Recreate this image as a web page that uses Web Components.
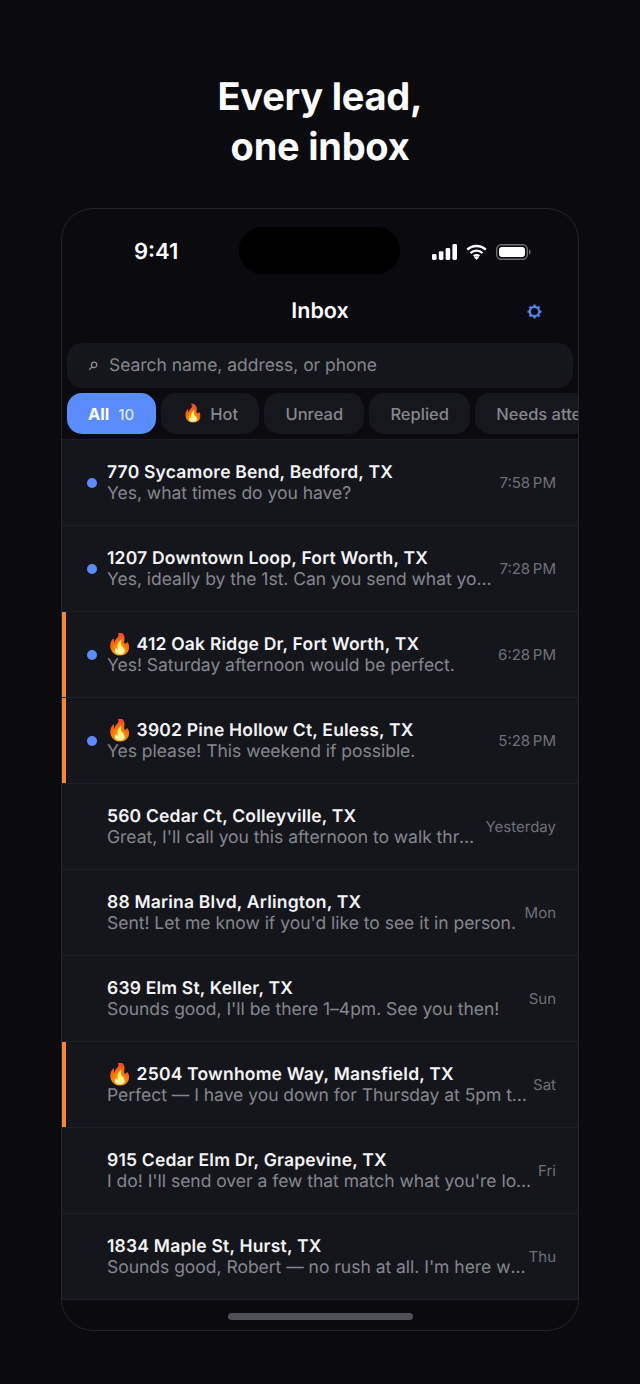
<!DOCTYPE html>
<html lang="en"><head><meta charset="utf-8"><title>Inbox</title>
<style>
html,body{margin:0;padding:0;background:#0a0a0f;}
body{width:640px;height:1384px;overflow:hidden;font-family:Inter,"Noto Sans",sans-serif;color:#fff;text-rendering:geometricPrecision;-webkit-font-smoothing:antialiased;}
</style></head><body>
<promo-page>
  <span slot="headline">Every lead,<br>one inbox</span>
  <phone-frame>
    <status-bar></status-bar>
    <nav-header>Inbox</nav-header>
    <search-bar placeholder="Search name, address, or phone"></search-bar>
    <filter-strip>
      <filter-chip active count="10">All</filter-chip>
      <filter-chip><span class="fire">🔥</span>Hot</filter-chip>
      <filter-chip>Unread</filter-chip>
      <filter-chip>Replied</filter-chip>
      <filter-chip>Needs attention</filter-chip>
    </filter-strip>
    <lead-list>
      <lead-row unread time="7:58 PM" title="770 Sycamore Bend, Bedford, TX" text="Yes, what times do you have?"></lead-row>
      <lead-row unread time="7:28 PM" title="1207 Downtown Loop, Fort Worth, TX" text="Yes, ideally by the 1st. Can you send what you have available?"></lead-row>
      <lead-row unread hot time="6:28 PM" title="412 Oak Ridge Dr, Fort Worth, TX" text="Yes! Saturday afternoon would be perfect."></lead-row>
      <lead-row unread hot time="5:28 PM" title="3902 Pine Hollow Ct, Euless, TX" text="Yes please! This weekend if possible."></lead-row>
      <lead-row time="Yesterday" title="560 Cedar Ct, Colleyville, TX" text="Great, I'll call you this afternoon to walk through the details."></lead-row>
      <lead-row time="Mon" title="88 Marina Blvd, Arlington, TX" text="Sent! Let me know if you'd like to see it in person."></lead-row>
      <lead-row time="Sun" title="639 Elm St, Keller, TX" text="Sounds good, I'll be there 1–4pm. See you then!"></lead-row>
      <lead-row hot time="Sat" title="2504 Townhome Way, Mansfield, TX" text="Perfect — I have you down for Thursday at 5pm to tour the home."></lead-row>
      <lead-row time="Fri" title="915 Cedar Elm Dr, Grapevine, TX" text="I do! I'll send over a few that match what you're looking for."></lead-row>
      <lead-row time="Thu" title="1834 Maple St, Hurst, TX" text="Sounds good, Robert — no rush at all. I'm here whenever you're ready."></lead-row>
    </lead-list>
    <home-indicator></home-indicator>
  </phone-frame>
</promo-page>
<script>
function def(name, css, html){
  customElements.define(name, class extends HTMLElement{
    connectedCallback(){ if(this.shadowRoot) return; const r=this.attachShadow({mode:'open'});r.innerHTML='<style>'+css+'</style>'+(typeof html==='function'?html(this):html);}
  });
}
def('promo-page',
 ':host{display:flex;flex-direction:column;align-items:center;width:640px;height:1384px;box-sizing:border-box;padding-top:72px}'+
 'h1{margin:0 0 36px;font:700 38px/50px Inter,sans-serif;letter-spacing:-.25px;text-align:center;color:#fff}',
 '<h1><slot name="headline"></slot></h1><slot></slot>');
def('phone-frame',
 ':host{display:flex;flex-direction:column;width:518px;height:1123px;box-sizing:border-box;border:1px solid #25262c;border-radius:32px;background:#0a0a0f;overflow:hidden}',
 '<slot></slot>');
def('status-bar',
 ':host{display:flex;align-items:center;height:76px;flex:none;box-sizing:border-box;padding:9px 46px 0 72px;position:relative}'+
 '.t{font:600 22px/1 Inter,sans-serif;color:#fff;width:44px;white-space:nowrap}'+
 '.i{position:absolute;left:177px;top:18px;width:161px;height:47px;border-radius:24px;background:#000}'+
 '.r{margin-left:auto;display:flex;align-items:center;gap:9px}svg{display:block}',
 `<span class="t">9:41</span><span class="i"></span><span class="r">
 <svg width="25" height="16" viewBox="0 0 25 16"><rect x="0" y="10" width="4.6" height="6" rx="1.4" fill="#fff"/><rect x="6.8" y="7.2" width="4.6" height="8.8" rx="1.4" fill="#fff"/><rect x="13.6" y="4" width="4.6" height="12" rx="1.4" fill="#fff"/><rect x="20.4" y="0" width="4.6" height="16" rx="1.4" fill="#fff"/></svg>
 <svg width="21" height="16" viewBox="0 0 21 16"><path d="M1.200 5.700a13.500 13.500 0 0 1 18.600 0M4.500 9a8.700 8.700 0 0 1 12 0M7.700 12.200a4.100 4.100 0 0 1 5.600 0" fill="none" stroke="#fff" stroke-width="2.300"/><path d="M10.500 16l-2.400-2.500a3.400 3.400 0 0 1 4.800 0z" fill="#fff"/></svg>
 <svg width="36" height="16" viewBox="0 0 36 16"><rect x=".7" y=".7" width="30.600" height="14.600" rx="4.500" fill="none" stroke="#6e6e72" stroke-width="1.400"/><rect x="3" y="3" width="26" height="10" rx="3" fill="#fff"/><path d="M33 5.600v4.800c1-.3 1.600-1.200 1.600-2.400s-.6-2.100-1.600-2.400z" fill="#6e6e72"/></svg>
 </span>`);
def('nav-header',
 ':host{display:flex;align-items:center;justify-content:center;height:58px;box-sizing:border-box;padding-bottom:4px;flex:none;position:relative;font:600 21.5px/1 Inter,sans-serif;color:#fff}'+
 'svg{position:absolute;right:36px;top:19px}',
 `<slot></slot><svg width="15" height="15" viewBox="0 0 24 24" fill="none" stroke="#4f86f0"><circle cx="12" cy="12" r="7.500" stroke-width="3.600"/><path d="M12 .8v4M12 19.200v4M.8 12h4M19.200 12h4M4.100 4.100l2.800 2.800M17.100 17.100l2.800 2.800M4.100 19.900l2.800-2.800M17.100 6.900l2.800-2.800" stroke-width="3.600"/></svg>`);
def('search-bar',
 ':host{display:flex;align-items:center;flex:none;height:45px;margin:0 5px;box-sizing:border-box;padding:1px 0 0 21px;border-radius:15px;background:#15161b;color:#85868d;font:400 17.45px/1 Inter,sans-serif}'+
 'svg{margin-right:11px;flex:none}',
 t=>`<svg width="10" height="10" viewBox="0 0 10 10" fill="none" stroke="#8c8d93" stroke-width="1.300"><circle cx="6.100" cy="3.900" r="2.700"/><path d="M4.100 5.900L1.200 8.800"/></svg><span>${t.getAttribute('placeholder')}</span>`);
def('filter-strip',
 ':host{display:flex;gap:5.3px;flex:none;margin-top:5px;padding:0 5px 5px;border-bottom:1px solid #1c1d23;overflow:hidden;box-sizing:border-box;height:47px}',
 '<slot></slot>');
def('filter-chip',
 ':host{display:inline-flex;align-items:center;flex:none;height:41px;box-sizing:border-box;padding:1px 21px 0;border-radius:15px;background:#16171c;color:#86878e;font:500 16.5px/1 Inter,sans-serif;white-space:nowrap}'+
 ':host([active]){background:#5b8cff;color:#fff;font-weight:700;padding-right:22px}'+
 '.c{margin-left:9px;font-weight:500;font-size:15px;color:#dfe8ff}::slotted(.fire){margin-right:6px;font-size:17.5px}',
 t=>`<slot></slot>${t.hasAttribute('count')?`<span class="c">${t.getAttribute('count')}</span>`:''}`);
def('lead-list',
 ':host{display:flex;flex-direction:column;flex:none}',
 '<slot></slot>');
def('lead-row',
 ':host{display:flex;align-items:center;gap:2px;flex:none;height:86px;box-sizing:border-box;padding:0 22px 0 45px;position:relative;background:#15161c;border-bottom:1px solid #1f2026}'+
 '.bar{position:absolute;left:0;top:0;bottom:0;width:4px;background:#f5873a}'+
 '.dot{position:absolute;left:25px;top:38px;width:10px;height:10px;border-radius:50%;background:#5b8cff}'+
 '.m{flex:1;min-width:0;display:flex;flex-direction:column;padding-top:1px}'+
 '.ti{font:600 17.5px/22px Inter,sans-serif;letter-spacing:.2px;color:#f4f4f6;white-space:nowrap;overflow:hidden;text-overflow:ellipsis}'+
 '.fi{font-size:22px;margin:0 3px 0 -1px;vertical-align:-1px}'+
 '.tx{margin-top:-1px;font:400 17.5px/22px Inter,sans-serif;letter-spacing:-.02px;color:#85868d;white-space:nowrap;overflow:hidden;text-overflow:ellipsis}'+
 '.tm{flex:none;font:400 15px/1 Inter,sans-serif;color:#6f7077;white-space:nowrap}',
 t=>{const a=n=>t.getAttribute(n),h=t.hasAttribute('hot'),u=t.hasAttribute('unread');
  return `${h?'<span class="bar"></span>':''}${u?'<span class="dot"></span>':''}<div class="m"><div class="ti">${h?'<span class="fi">🔥</span>':''}${a('title')}</div><div class="tx">${a('text')}</div></div><span class="tm">${a('time').replace(' ','\u202f')}</span>`;});
def('home-indicator',
 ':host{display:flex;justify-content:center;flex:1;padding-top:13px}i{display:block;width:185px;height:7px;border-radius:4px;background:#4f5055}',
 '<i></i>');
</script>
</body></html>
